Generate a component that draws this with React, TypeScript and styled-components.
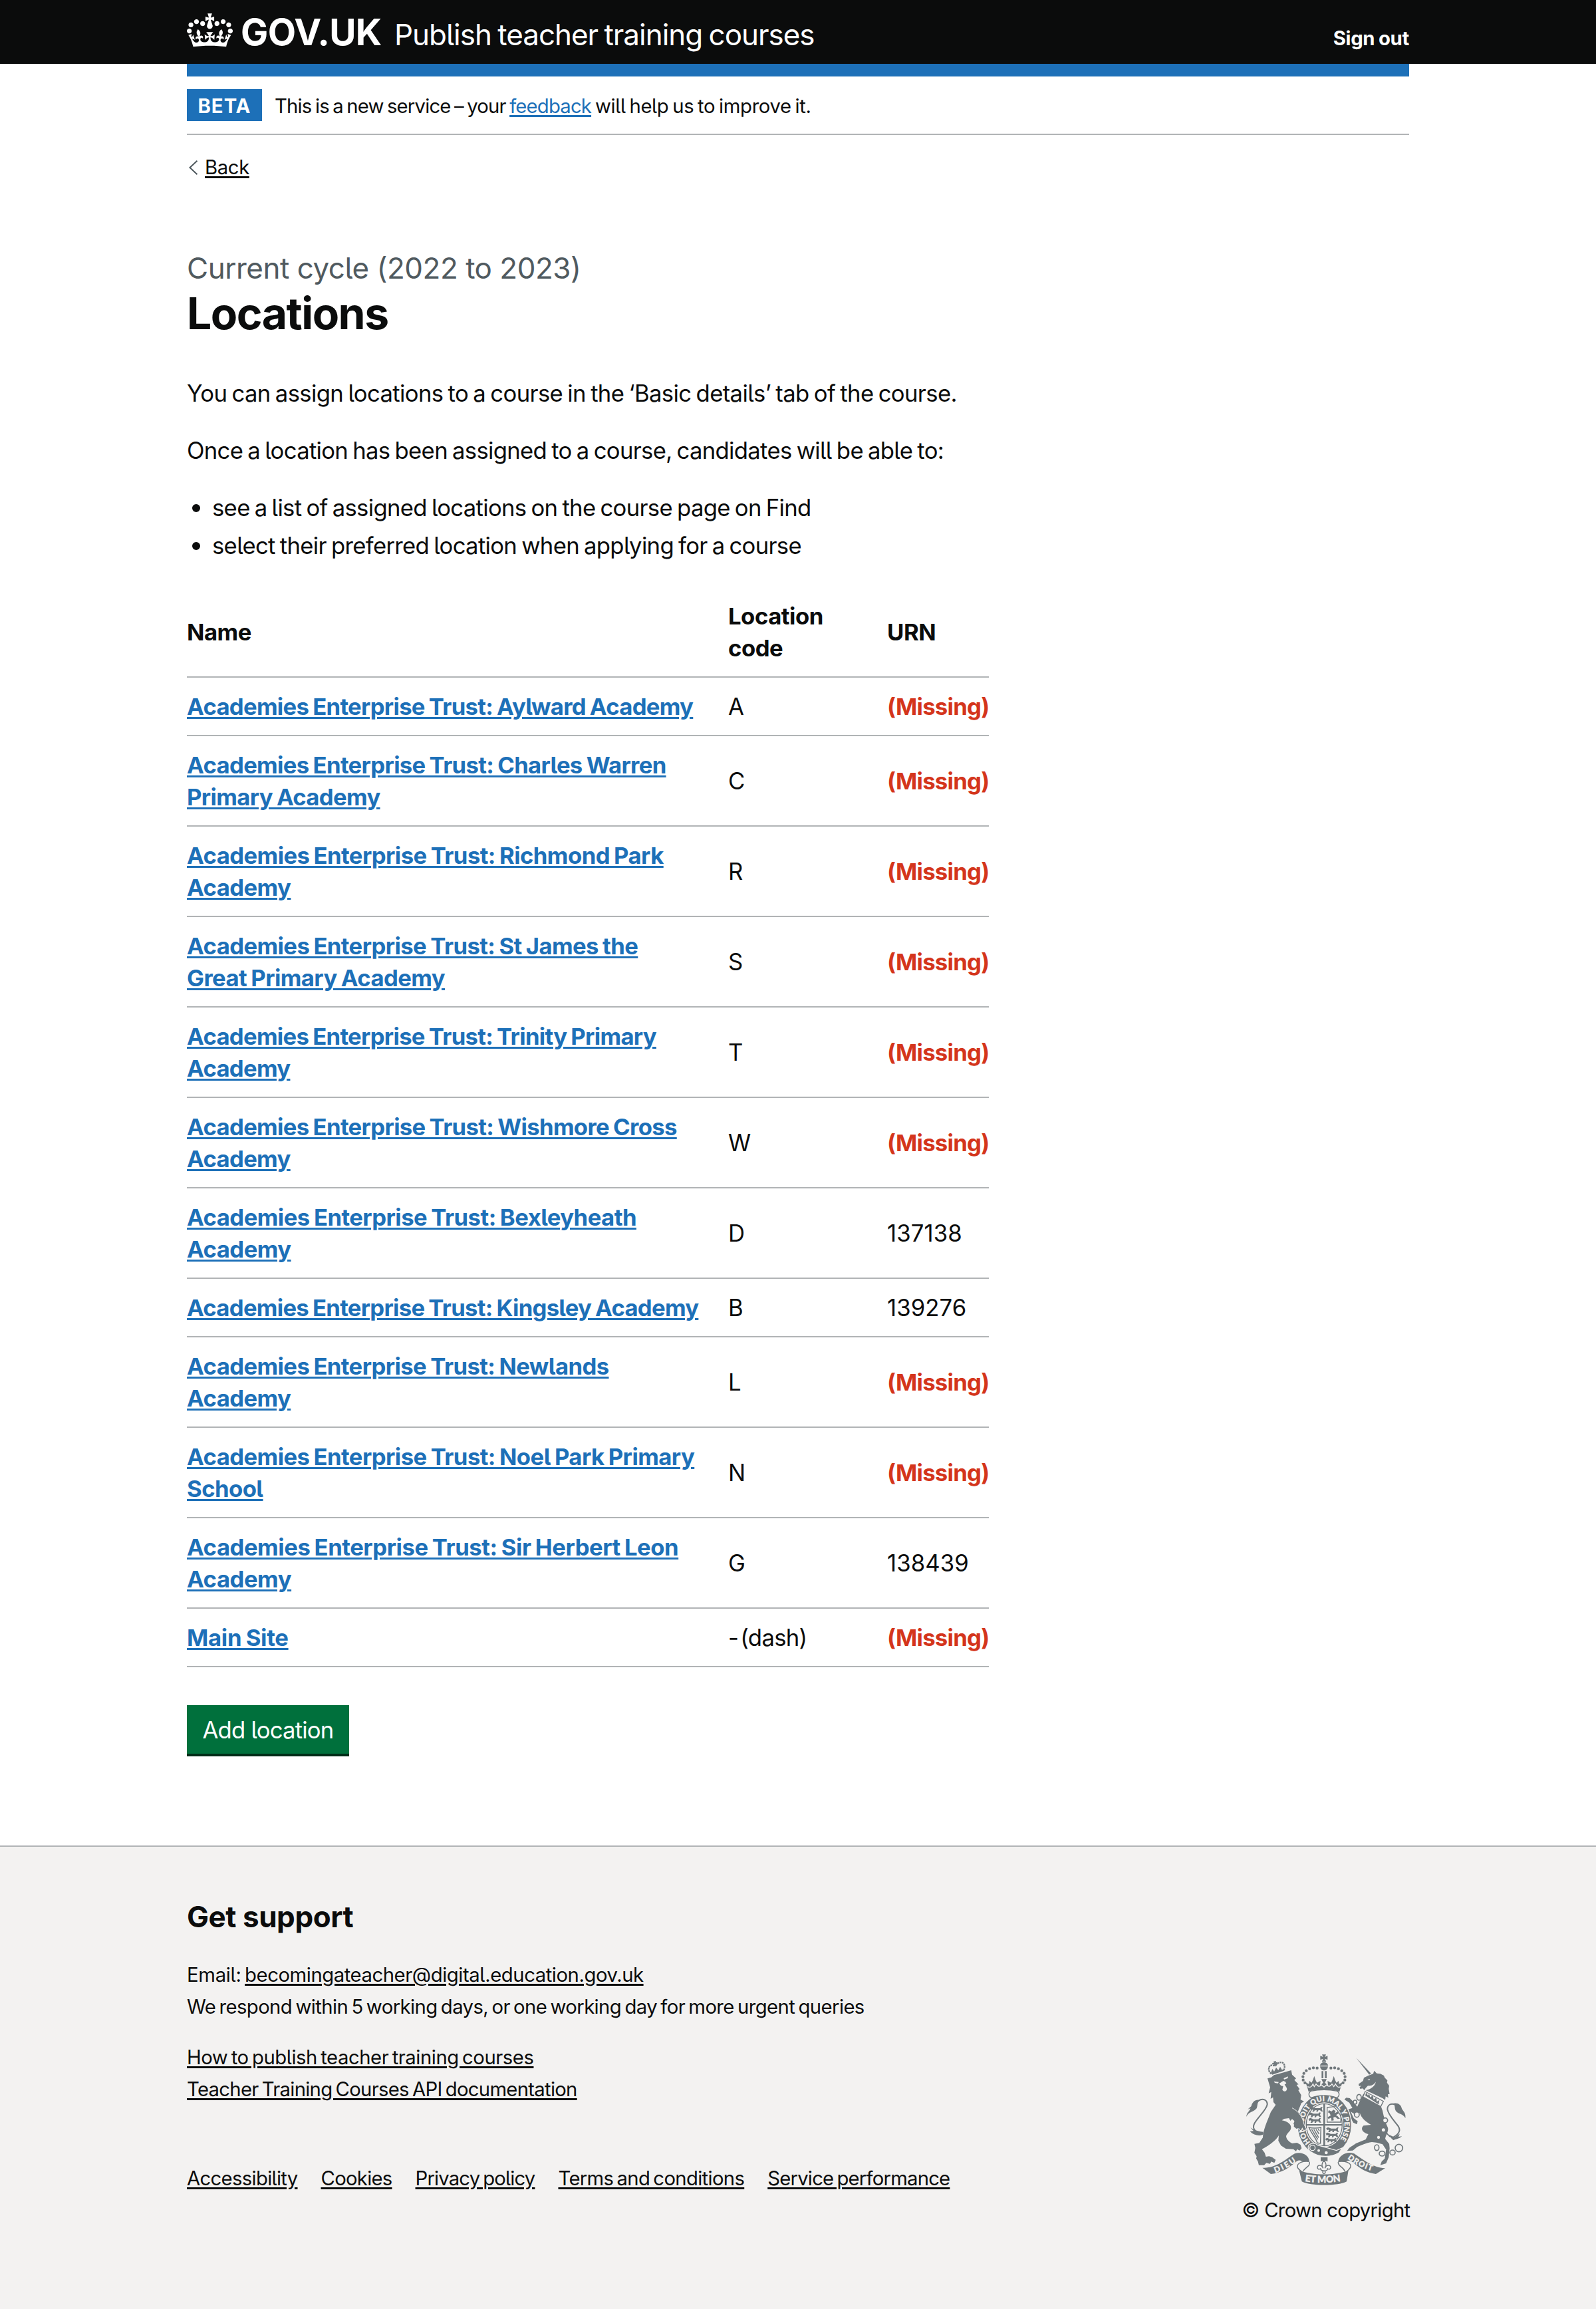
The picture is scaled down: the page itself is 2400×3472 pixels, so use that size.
import React from 'react';
import styled, { createGlobalStyle } from 'styled-components';

const c = {
  black: '#0b0c0c',
  blue: '#1d70b8',
  grey: '#505a5f',
  border: '#b1b4b6',
  pale: '#f3f2f1',
  red: '#d4351c',
  green: '#00703c',
  greenDark: '#002d18',
  crest: '#6f777b',
};

const GlobalStyle = createGlobalStyle`
  body {
    margin: 0;
    background: #fff;
    color: ${c.black};
    font-family: Inter, "Noto Sans", sans-serif;
    font-feature-settings: "cv05";
    -webkit-font-smoothing: antialiased;
  }
  *, *::before, *::after { box-sizing: border-box; }
`;

const Container = styled.div`
  width: 1838px;
  margin: 0 auto;
`;

const Header = styled.header`
  height: 96px;
  background: ${c.black};
  color: #fff;
`;

const HeaderRow = styled(Container)`
  display: flex;
  align-items: baseline;
  padding-top: 20px;
`;

const CrownIcon = styled.svg`
  align-self: flex-start;
  width: 69px;
  height: 51px;
  margin-right: 12px;
  flex: none;
`;

const Logotype = styled.span`
  width: 231px;
  font-size: 55px;
  font-weight: 700;
  line-height: 57px;
  letter-spacing: -0.6px;
`;

const ServiceName = styled.span`
  flex: 1;
  font-size: 44px;
  line-height: 1;
  letter-spacing: -1.03px;
  word-spacing: -2px;
`;

const SignOut = styled.a`
  font-size: 29.3px;
  font-weight: 700;
  line-height: 1;
  letter-spacing: -0.3px;
  word-spacing: -1px;
`;

const BlueBar = styled(Container)`
  height: 19px;
  background: ${c.blue};
`;

const PhaseBanner = styled(Container)`
  display: flex;
  gap: 19px;
  height: 88px;
  padding-top: 19px;
  border-bottom: 2px solid ${c.border};
`;

const Tag = styled.strong`
  width: 113px;
  height: 48px;
  background: ${c.blue};
  color: #fff;
  font-size: 29.3px;
  line-height: 51px;
  letter-spacing: 1px;
  text-align: center;
`;

const PhaseText = styled.span<{ $track?: number }>`
  font-size: 29.3px;
  line-height: 51px;
  letter-spacing: ${p => p.$track ?? -0.83}px;
  word-spacing: -2px;
`;

const Link = styled.a<{ $color?: string; $track?: number }>`
  color: ${p => p.$color || c.black};
  letter-spacing: ${p => (p.$track === undefined ? 'inherit' : `${p.$track}px`)};
  text-decoration: underline;
  text-decoration-thickness: 2.5px;
  text-underline-offset: 2.5px;
`;

const BackRow = styled(Container)`
  display: flex;
  align-items: center;
  gap: 10px;
  padding: 25px 0 0 2px;
  font-size: 29.3px;
  line-height: 48px;
  letter-spacing: -0.4px;
`;

const Main = styled(Container)`
  padding-top: 99px;
`;

const TwoThirds = styled.div`
  width: 1206px;
`;

const Caption = styled.div`
  color: ${c.grey};
  font-size: 44px;
  line-height: 57px;
  letter-spacing: -0.5px;
  margin-bottom: 3px;
`;

const Title = styled.h1`
  margin: 0 0 60px;
  font-size: 66px;
  line-height: 72px;
  letter-spacing: -1.5px;
`;

const Paragraph = styled.p<{ $track?: number }>`
  margin: 0 0 38px;
  font-size: 34.7px;
  line-height: 48px;
  letter-spacing: ${p => p.$track ?? -0.71}px;
  word-spacing: -1.9px;
`;

const List = styled.ul`
  margin: 0 0 39px;
  padding: 0;
  list-style: none;
  font-size: 34.7px;
  line-height: 48px;
  letter-spacing: -0.7px;
  word-spacing: -2px;
`;

const Item = styled.li`
  display: flex;
  align-items: center;
  margin-bottom: 9px;
  &::before {
    content: '';
    width: 12px;
    height: 12px;
    margin: 2px 18px 0 8px;
    border-radius: 50%;
    background: ${c.black};
  }
`;

const Table = styled.table`
  width: 1206px;
  table-layout: fixed;
  border-collapse: separate;
  border-spacing: 0;
  font-size: 34.7px;
  line-height: 48px;
  letter-spacing: -0.7px;
  word-spacing: -1.5px;
`;

const Th = styled.th<{ $w: number }>`
  width: ${p => p.$w}px;
  padding: 19px 38px 19px 0;
  border-bottom: 2px solid ${c.border};
  text-align: left;
  font-weight: 700;
  letter-spacing: -0.5px;
`;

const Td = styled.td<{ $bold?: boolean; $red?: boolean; $last?: boolean }>`
  padding: 19px ${p => (p.$last ? 0 : 38)}px 19px 0;
  border-bottom: 2px solid ${c.border};
  font-weight: ${p => (p.$bold ? 700 : 400)};
  color: ${p => (p.$red ? c.red : c.black)};
  white-space: nowrap;
`;

const Code = styled(Td)`
  word-spacing: -6px;
`;

const Urn = styled(Td)`
  letter-spacing: ${p => (p.$red ? -0.75 : 0.1)}px;
`;

const Button = styled.button`
  display: block;
  width: 244px;
  height: 73px;
  margin: 57px 0 138px;
  padding: 0;
  border: 0;
  background: ${c.green};
  box-shadow: 0 4px 0 ${c.greenDark};
  color: #fff;
  font-family: inherit;
  font-feature-settings: inherit;
  font-size: 34.7px;
  line-height: 75px;
  letter-spacing: -0.8px;
`;

const Footer = styled.footer`
  height: 697px;
  background: ${c.pale};
  border-top: 2px solid ${c.border};
`;

const FooterRow = styled(Container)`
  display: flex;
  justify-content: space-between;
  align-items: flex-end;
  height: 571px;
  font-size: 29.3px;
  line-height: 48px;
  letter-spacing: -0.6px;
  word-spacing: -2.4px;
`;

const Support = styled.div`
  padding-bottom: 48px;
`;

const FooterHeading = styled.h2`
  margin: 0 0 35px;
  font-size: 44px;
  line-height: 58px;
  letter-spacing: -0.45px;
  word-spacing: 0;
`;

const Lines = styled.div<{ $gap: number }>`
  display: flex;
  flex-direction: column;
  align-items: flex-start;
  margin-bottom: ${p => p.$gap}px;
`;

const EmailLine = styled.span`
  letter-spacing: -0.3px;
`;

const FooterNav = styled.nav`
  display: flex;
  gap: 35px;
`;

const Copyright = styled.div`
  display: flex;
  flex-direction: column;
  align-items: center;
  width: 250px;
  letter-spacing: -0.72px;
  word-spacing: 0;
  white-space: nowrap;
`;

const CrestSvg = styled.svg`
  width: 240px;
  height: 197px;
  margin-bottom: 14px;
`;

const CrestText = styled.text`
  fill: ${c.pale};
  stroke: ${c.pale};
  stroke-width: 1px;
  font-family: Lato, Inter, sans-serif;
  font-weight: 900;
  letter-spacing: 0;
  word-spacing: 0;
`;

const Crown = () => (
  <CrownIcon viewBox="0 0 132 97" aria-hidden="true">
    <path
      fill="#fff"
      fillRule="evenodd"
      d="M25 30.2c3.5 1.5 7.7-.2 9.1-3.7 1.5-3.6-.2-7.8-3.9-9.2-3.6-1.4-7.6.3-9.1 3.9-1.4 3.5.3 7.5 3.9 9zM9 39.5c3.6 1.5 7.8-.2 9.2-3.7 1.5-3.6-.2-7.8-3.9-9.1-3.6-1.5-7.6.2-9.1 3.8-1.4 3.5.3 7.5 3.8 9zM4.4 57.2c3.5 1.5 7.7-.2 9.1-3.8 1.5-3.6-.2-7.7-3.9-9.1-3.5-1.5-7.6.3-9.1 3.8-1.4 3.5.3 7.6 3.9 9.1zm38.3-21.4c3.5 1.5 7.7-.2 9.1-3.8 1.5-3.6-.2-7.7-3.9-9.1-3.6-1.5-7.6.3-9.1 3.8-1.3 3.6.4 7.7 3.9 9.1zm64.4-5.6c-3.6 1.5-7.8-.2-9.1-3.7-1.5-3.6.2-7.8 3.8-9.2 3.6-1.4 7.7.3 9.2 3.9 1.3 3.5-.4 7.5-3.9 9zm15.9 9.3c-3.6 1.5-7.7-.2-9.1-3.7-1.5-3.6.2-7.8 3.7-9.1 3.6-1.5 7.7.2 9.2 3.8 1.5 3.5-.3 7.5-3.8 9zm4.7 17.7c-3.6 1.5-7.8-.2-9.2-3.8-1.5-3.6.2-7.7 3.9-9.1 3.6-1.5 7.7.3 9.2 3.8 1.3 3.5-.4 7.6-3.9 9.1zM89.3 35.8c-3.6 1.5-7.8-.2-9.2-3.8-1.4-3.6.2-7.7 3.9-9.1 3.6-1.5 7.7.3 9.2 3.8 1.4 3.6-.3 7.7-3.9 9.1zM69.7 17.7l8.9 4.7V9.3l-8.9 2.8c-.2-.3-.5-.6-.9-.9L72.4 0H59.6l3.5 11.2c-.3.3-.6.5-.9.9l-8.8-2.8v13.1l8.8-4.7c.3.3.6.7.9.9l-5 15.4v.1c-.2.8-.4 1.6-.4 2.4 0 4.1 3.1 7.5 7 8.1h.2c.3 0 .7.1 1 .1.4 0 .7 0 1-.1h.2c4-.6 7.1-4.1 7.1-8.1 0-.8-.1-1.7-.4-2.4V34l-5.1-15.4c.4-.2.7-.6 1-.9zM66 92.8c16.9 0 32.8 1.1 47.1 3.2 4-16.9 8.9-26.7 14-33.5l-9.6-3.4c1 4.9 1.1 7.2 0 10.2-1.5-1.4-3-4.3-4.2-8.7L108.6 76c2.8-2 5-3.2 7.5-3.3-4.4 9.4-10 11.9-13.6 11.2-4.3-.8-6.3-4.6-5.6-7.9 1-4.7 5.7-5.9 8-.5 4.3-8.7-3-11.4-7.6-8.8 7.1-7.2 7.9-13.5 2.1-21.1-8 6.1-8.1 12.3-4.5 20.8-4.7-5.4-12.1-2.5-9.5 6.2 3.4-5.2 7.9-2 7.2 3.1-.6 4.3-6.4 7.8-13.5 7.2-10.3-.9-10.9-8-11.2-13.8 2.5-.5 7.1 1.8 11 7.3L80.2 60c-4.1 4.4-8 5.3-12.3 5.4 1.4-4.4 8-11.6 8-11.6H55.5s6.4 7.2 7.9 11.6c-4.2-.1-8-1-12.3-5.4l1.4 16.4c3.9-5.5 8.5-7.7 10.9-7.3-.3 5.8-.9 12.8-11.1 13.8-7.2.6-12.9-2.9-13.5-7.2-.7-5 3.8-8.3 7.1-3.1 2.7-8.7-4.6-11.6-9.4-6.2 3.7-8.5 3.6-14.7-4.6-20.8-5.8 7.6-5 13.9 2.2 21.1-4.7-2.6-11.9.1-7.7 8.8 2.3-5.5 7.1-4.2 8.1.5.7 3.3-1.3 7.1-5.7 7.9-3.5.7-9-1.8-13.5-11.2 2.5.1 4.7 1.3 7.5 3.3l-4.7-15.4c-1.2 4.4-2.7 7.2-4.3 8.7-1.1-3-.9-5.3 0-10.2l-9.5 3.4c5 6.9 9.9 16.7 14 33.5 14.8-2.1 30.8-3.2 47.7-3.2z"
    />
  </CrownIcon>
);

const beads: [number, number][] = [
  [421, 148], [404, 147], [387, 151], [372, 160], [361, 172], [357, 187], [358, 202], [366, 215],
];

/* small walking lion used in the shield quarters */
const passant =
  'M0 6l8-5 8 3 6 3h22l6-6 6 2-4 6 2 8 4 5h-8l-6-6-8 1-2 6h-7l2-7-9 1-3 6h-8l4-8-4-3-5 3z';

const Crest = () => (
  <CrestSvg viewBox="101 86 720 591" aria-hidden="true">
    <defs>
      <path id="garter" d="M390 483A92 107 0 1 1 522 474" />
      <path id="dieu" d="M232 621Q290 602 350 552" />
      <path id="etmon" d="M366 659Q452 672 545 656" />
      <path id="droit" d="M557 556Q610 598 695 620" />
    </defs>
    <g fill={c.crest}>
      {/* lion */}
      <path d="M197 195L214 190 226 180 262 170 304 158 308 178 326 195 318 202 337 222 328 224 342 243 336 248 349 270 346 290 362 299 350 306 334 345 352 362 366 396 370 424 358 430 350 418 342 428 334 416 325 420 314 398 320 388 308 378 300 386 294 374 272 377 262 384C290 390 304 402 303 418 302 434 284 440 281 456 283 472 296 482 308 488L330 485 346 494 351 510 342 520 330 514 326 524 314 514 280 512 258 498 246 476 248 452C238 470 214 492 172 514L184 530 190 548 204 546 218 550 234 562 228 576 214 570 208 580 192 576 182 586 158 586 154 570 146 556 148 546 138 530 142 508 138 490 160 486 176 462C176 430 196 388 212 346L234 314 224 302 222 280 211 287 214 256 202 262 209 235Z" />
      {/* lion's coronet */}
      <path d="M214 174C204 164 200 156 204 148M270 158C276 148 276 134 268 126M204 146C208 134 220 132 232 140M234 136C244 124 258 118 268 126" fill="none" stroke={c.crest} strokeWidth="7" strokeDasharray="8 3" />
      <path d="M213 168L219 152 227 164 236 146 246 158 254 142 262 156 270 154 272 160 218 178ZM224 118l12-2-2 7 8-2 2 8-9-1 2 10-9 2-1-10-7 3-2-8 8-1z" />
      {/* lion's tail */}
      <path d="M178 444C150 446 124 424 138 398 154 368 192 338 196 312 196 292 176 282 156 296" fill="none" stroke={c.crest} strokeWidth="6" />
      <path d="M176 448C160 456 136 452 118 434L134 432 120 416C146 434 164 434 178 436ZM165 293C144 286 128 300 124 320L108 334 120 330C116 344 102 350 102 368 110 346 136 346 148 330 154 314 148 304 165 293Z" />
      {/* unicorn */}
      <path d="M597 102L664 172 656 178Z" />
      <path d="M652 182L674 174 678 160 690 172 706 174 722 182 726 192 738 204 736 214 746 228 744 242 748 266 740 266 742 282 730 276 728 292 716 284 640 248C660 246 682 232 686 210 676 226 660 230 650 228L640 238 634 248 626 240 616 242 612 236 620 228 610 230 608 220 628 206 632 192Z" />
      <path d="M630 264L708 318 716 340C722 370 728 390 738 412 748 430 730 450 728 468L746 490 748 510 744 550 732 578 706 586 712 570 726 556 732 516 716 492 688 484 668 482C640 486 620 496 602 504L582 520 556 522 566 508 596 488 640 470 652 446C628 440 614 424 630 408L664 404C644 392 622 376 614 352L586 354 572 344 586 374 604 388 600 402 584 394 562 354 558 336 580 328 566 304 544 290 552 282 568 284 584 300 602 322 612 300Z" />
      {/* unicorn's tail */}
      <path d="M728 412C728 440 744 456 760 462M756 464C786 452 800 432 788 412 768 384 742 360 738 334 738 314 754 306 770 312" fill="none" stroke={c.crest} strokeWidth="6" />
      <path d="M762 308C784 302 800 314 802 328 806 342 822 346 819 374 808 354 786 356 776 342 768 328 776 316 762 308ZM744 448L770 460 794 444 788 458 804 456C790 468 772 470 764 474Z" />
    </g>
    {/* chain and coronet round the unicorn's neck */}
    <path d="M638 254L720 298 708 322 628 278Z" fill={c.pale} stroke={c.crest} strokeWidth="4" />
    <path d="M638 272l4-14 8 14 6-8 4 16 12-8 4 18 12-8 2 18 12-8-4 20z" fill={c.crest} />
    <g fill={c.pale} stroke={c.crest} strokeWidth="5">
      <ellipse cx="610" cy="280" rx="10" ry="13" />
      <ellipse cx="592" cy="302" rx="8" ry="9" />
      <ellipse cx="600" cy="358" rx="11" ry="12" />
      <circle cx="728" cy="384" r="11" />
      <circle cx="720" cy="427" r="10" />
      <circle cx="698" cy="461" r="9" />
      <ellipse cx="690" cy="507" rx="10" ry="13" fill="none" />
      <ellipse cx="714" cy="534" rx="13" ry="11" fill="none" />
      <ellipse cx="761" cy="529" rx="12" ry="11" fill="none" />
      <circle cx="790" cy="509" r="17" fill="none" />
    </g>
    {/* faces */}
    <path d="M226 208l22 3-4 6-14-2zM270 194l20-8-2 8-16 6zM250 218l18-12 10 4 4 8-8 4 10 16c4 14-14 22-20 8l4-16-10-2z" fill={c.pale} />
    <path d="M648 200l12-2-4 6z" fill={c.pale} />
    {/* royal crown */}
    <g fill={c.crest}>
      <path d="M443 87h18l-5 11 12-5v18l-12-5 6 14h-20l6-14-13 5V93l13 5zM433 137c4-10 10-15 19-15s16 5 19 15zM434 141h36c-2 12-8 18-18 18s-16-6-18-18z" />
      {beads.map(([x, y]) => (
        <g key={y * 1000 + x}>
          <circle cx={x} cy={y} r="6.5" />
          <circle cx={904 - x} cy={y} r="6.5" />
        </g>
      ))}
      <path d="M441 162h8v32h-8zM456 162h8v32h-8z" />
      <path d="M368 212L384 220 386 206 396 214 402 202 408 184 414 202 420 214 436 206 434 228 448 214 440 198H464L456 214 470 228 468 206 484 214 490 202 496 184 502 202 508 214 518 206 520 220 536 212C530 226 526 238 522 254 480 242 424 242 382 254 378 238 374 226 368 212Z" />
    </g>
    <path d="M378 232Q394 240 402 220L408 232 416 220Q428 238 440 224L452 234 464 224Q476 238 488 220L496 232 504 220Q512 240 528 232" fill="none" stroke={c.pale} strokeWidth="4" />
    {/* garter */}
    <ellipse cx="454" cy="405" rx="122" ry="142" fill={c.crest} stroke={c.pale} strokeWidth="4" />
    <path d="M392 252C430 244 474 244 512 252 524 260 522 276 510 282 474 268 430 268 394 282 382 276 380 260 392 252Z" fill={c.pale} stroke={c.crest} strokeWidth="4" />
    <ellipse cx="453" cy="404" rx="87" ry="101" fill={c.pale} />
    <ellipse cx="453" cy="404" rx="81" ry="95" fill="none" stroke={c.crest} strokeWidth="4" />
    <CrestText fontSize="32">
      <textPath href="#garter" textLength="468">HONI SOIT QUI MAL Y PENSE</textPath>
    </CrestText>
    <g fill={c.crest}>
      <path d="M449 310h8v188h-8zM372 401h162v7H372z" />
      <path d={passant} transform="translate(390 322)" />
      <path d={passant} transform="translate(382 347)" />
      <path d={passant} transform="translate(382 372)" />
      <path d={passant} transform="translate(462 414)" />
      <path d={passant} transform="translate(460 438)" />
      <path d={passant} transform="translate(458 462) scale(.9)" />
      <path d="M474 338l12 6 8-8 10 6-4 10 14-8 6 8-14 8 8 6 10 10-10 2-12-10-8 4 2 12-10 2-2-14-12 6-4-8 14-8-4-10-8-4z" />
    </g>
    <path d="M466 326V392H528V352M464 326L500 322" fill="none" stroke={c.crest} strokeWidth="4" />
    <path d="M384 416C398 420 424 420 438 416L436 488 422 486C414 460 396 446 384 416ZM396 424L424 470M406 424L428 462M416 424L430 446M426 422L431 432" fill="none" stroke={c.crest} strokeWidth="4.5" />
    {/* lion's forepaw over the garter */}
    <path d="M310 328C340 342 358 372 364 404L372 424 360 428 354 416 348 430 338 418 328 422 316 412 320 370Z" fill={c.crest} />
    <path d="M308 328C340 344 356 372 362 402L374 426 360 430 354 420 348 433 338 422 328 425" fill="none" stroke={c.pale} strokeWidth="3" />
    {/* buckle */}
    <path d="M386 494C396 484 414 486 424 496L508 520 536 508 520 530C484 552 430 552 396 528 380 520 376 502 386 494Z" fill={c.crest} stroke={c.pale} strokeWidth="4" />
    <circle cx="400" cy="508" r="12" fill="none" stroke={c.pale} strokeWidth="4" />
    <circle cx="428" cy="520" r="6" fill={c.pale} />
    <circle cx="462" cy="530" r="7" fill={c.pale} />
    {/* ribbon */}
    <g fill={c.crest}>
      <path d="M174 598C234 602 278 560 320 534 350 524 384 540 386 570L352 568C340 560 330 566 322 574 290 602 258 620 212 626Z" />
      <path d="M728 600C670 598 628 560 588 534 558 522 520 540 516 570L552 570C562 562 576 566 584 574 612 600 644 620 686 626Z" />
      <path d="M340 610C400 632 500 634 562 610L554 660C520 681 388 681 352 660Z" />
      <path d="M437 550h31v20c-8-4-22-4-31 0z" />
    </g>
    <path d="M386 570C360 566 330 574 332 594 334 606 350 612 358 620M386 572C392 592 366 594 358 614M516 570C546 566 576 574 572 594 568 606 556 612 548 620M516 572C514 592 540 594 546 614" fill="none" stroke={c.crest} strokeWidth="4.5" />
    <path d="M452 566C462 576 464 588 456 600 462 584 482 582 482 598 480 606 474 606 468 602 468 610 460 612 452 612 444 612 438 610 436 602 430 606 424 606 422 598 422 582 442 584 448 600 440 588 442 576 452 566Z" fill={c.pale} stroke={c.crest} strokeWidth="4.5" />
    <circle cx="452" cy="618" r="6" fill={c.pale} stroke={c.crest} strokeWidth="4" />
    <CrestText fontSize="36"><textPath href="#dieu" textLength="108">DIEU</textPath></CrestText>
    <CrestText fontSize="42"><textPath href="#etmon" textLength="162">ET MON</textPath></CrestText>
    <CrestText fontSize="35"><textPath href="#droit" textLength="124">DROIT</textPath></CrestText>
  </CrestSvg>
);

const Missing = '(Missing)';
const rows: { name: string[]; code: string; urn: string; track: number }[] = [
  { name: ['Academies Enterprise Trust: Aylward Academy'], code: 'A', urn: Missing, track: -0.72 },
  { name: ['Academies Enterprise Trust: Charles Warren', 'Primary Academy'], code: 'C', urn: Missing, track: -0.68 },
  { name: ['Academies Enterprise Trust: Richmond Park', 'Academy'], code: 'R', urn: Missing, track: -0.58 },
  { name: ['Academies Enterprise Trust: St James the', 'Great Primary Academy'], code: 'S', urn: Missing, track: -0.6 },
  { name: ['Academies Enterprise Trust: Trinity Primary', 'Academy'], code: 'T', urn: Missing, track: -0.72 },
  { name: ['Academies Enterprise Trust: Wishmore Cross', 'Academy'], code: 'W', urn: Missing, track: -0.68 },
  { name: ['Academies Enterprise Trust: Bexleyheath', 'Academy'], code: 'D', urn: '137138', track: -0.55 },
  { name: ['Academies Enterprise Trust: Kingsley Academy'], code: 'B', urn: '139276', track: -0.74 },
  { name: ['Academies Enterprise Trust: Newlands', 'Academy'], code: 'L', urn: Missing, track: -0.6 },
  { name: ['Academies Enterprise Trust: Noel Park Primary', 'School'], code: 'N', urn: Missing, track: -0.58 },
  { name: ['Academies Enterprise Trust: Sir Herbert Leon', 'Academy'], code: 'G', urn: '138439', track: -0.48 },
  { name: ['Main Site'], code: '- (dash)', urn: Missing, track: -0.3 },
];

export default function App() {
  return (
    <>
      <GlobalStyle />
      <Header>
        <HeaderRow>
          <Crown />
          <Logotype>GOV.UK</Logotype>
          <ServiceName>Publish teacher training courses</ServiceName>
          <SignOut>Sign out</SignOut>
        </HeaderRow>
      </Header>
      <BlueBar />
      <PhaseBanner>
        <Tag>BETA</Tag>
        <PhaseText>
          This is a new service – your <Link $color={c.blue}>feedback</Link>
          <PhaseText $track={-0.38}> will help us to improve it.</PhaseText>
        </PhaseText>
      </PhaseBanner>
      <BackRow>
        <svg width="15" height="22" viewBox="0 0 15 22">
          <path d="M13.5 .8L2.5 11l11 10.2" fill="none" stroke={c.grey} strokeWidth="2" />
        </svg>
        <Link>Back</Link>
      </BackRow>
      <Main as="main">
        <TwoThirds>
          <Caption>Current cycle (2022 to 2023)</Caption>
          <Title>Locations</Title>
          <Paragraph $track={-0.65}>You can assign locations to a course in the ‘Basic details’ tab of the course.</Paragraph>
          <Paragraph>Once a location has been assigned to a course, candidates will be able to:</Paragraph>
          <List>
            <Item>see a list of assigned locations on the course page on Find</Item>
            <Item>select their preferred location when applying for a course</Item>
          </List>
          <Table>
            <thead>
              <tr>
                <Th $w={814}>Name</Th>
                <Th $w={239}>Location code</Th>
                <Th $w={153}>URN</Th>
              </tr>
            </thead>
            <tbody>
              {rows.map(({ name, code, urn, track }) => (
                <tr key={code}>
                  <Td $bold>
                    <Link $color={c.blue} $track={track}>
                      {name.map((line, i) => (
                        <React.Fragment key={line}>
                          {i > 0 && <br />}
                          {line}
                        </React.Fragment>
                      ))}
                    </Link>
                  </Td>
                  <Code>{code}</Code>
                  <Urn $last $bold={urn === Missing} $red={urn === Missing}>{urn}</Urn>
                </tr>
              ))}
            </tbody>
          </Table>
          <Button>Add location</Button>
        </TwoThirds>
      </Main>
      <Footer>
        <FooterRow>
          <Support>
            <FooterHeading>Get support</FooterHeading>
            <Lines $gap={28}>
              <EmailLine>Email: <Link $track={-0.46}>becomingateacher@digital.education.gov.uk</Link></EmailLine>
              <span>We respond within 5 working days, or one working day for more urgent queries</span>
            </Lines>
            <Lines $gap={86}>
              <Link $track={-0.47}>How to publish teacher training courses</Link>
              <Link $track={-0.72}>Teacher Training Courses API documentation</Link>
            </Lines>
            <FooterNav>
              <Link $track={-0.7}>Accessibility</Link>
              <Link $track={-0.75}>Cookies</Link>
              <Link $track={-0.85}>Privacy policy</Link>
              <Link $track={-0.68}>Terms and conditions</Link>
              <Link $track={-0.8}>Service performance</Link>
            </FooterNav>
          </Support>
          <Copyright>
            <Crest />
            <span>© Crown copyright</span>
          </Copyright>
        </FooterRow>
      </Footer>
    </>
  );
}
